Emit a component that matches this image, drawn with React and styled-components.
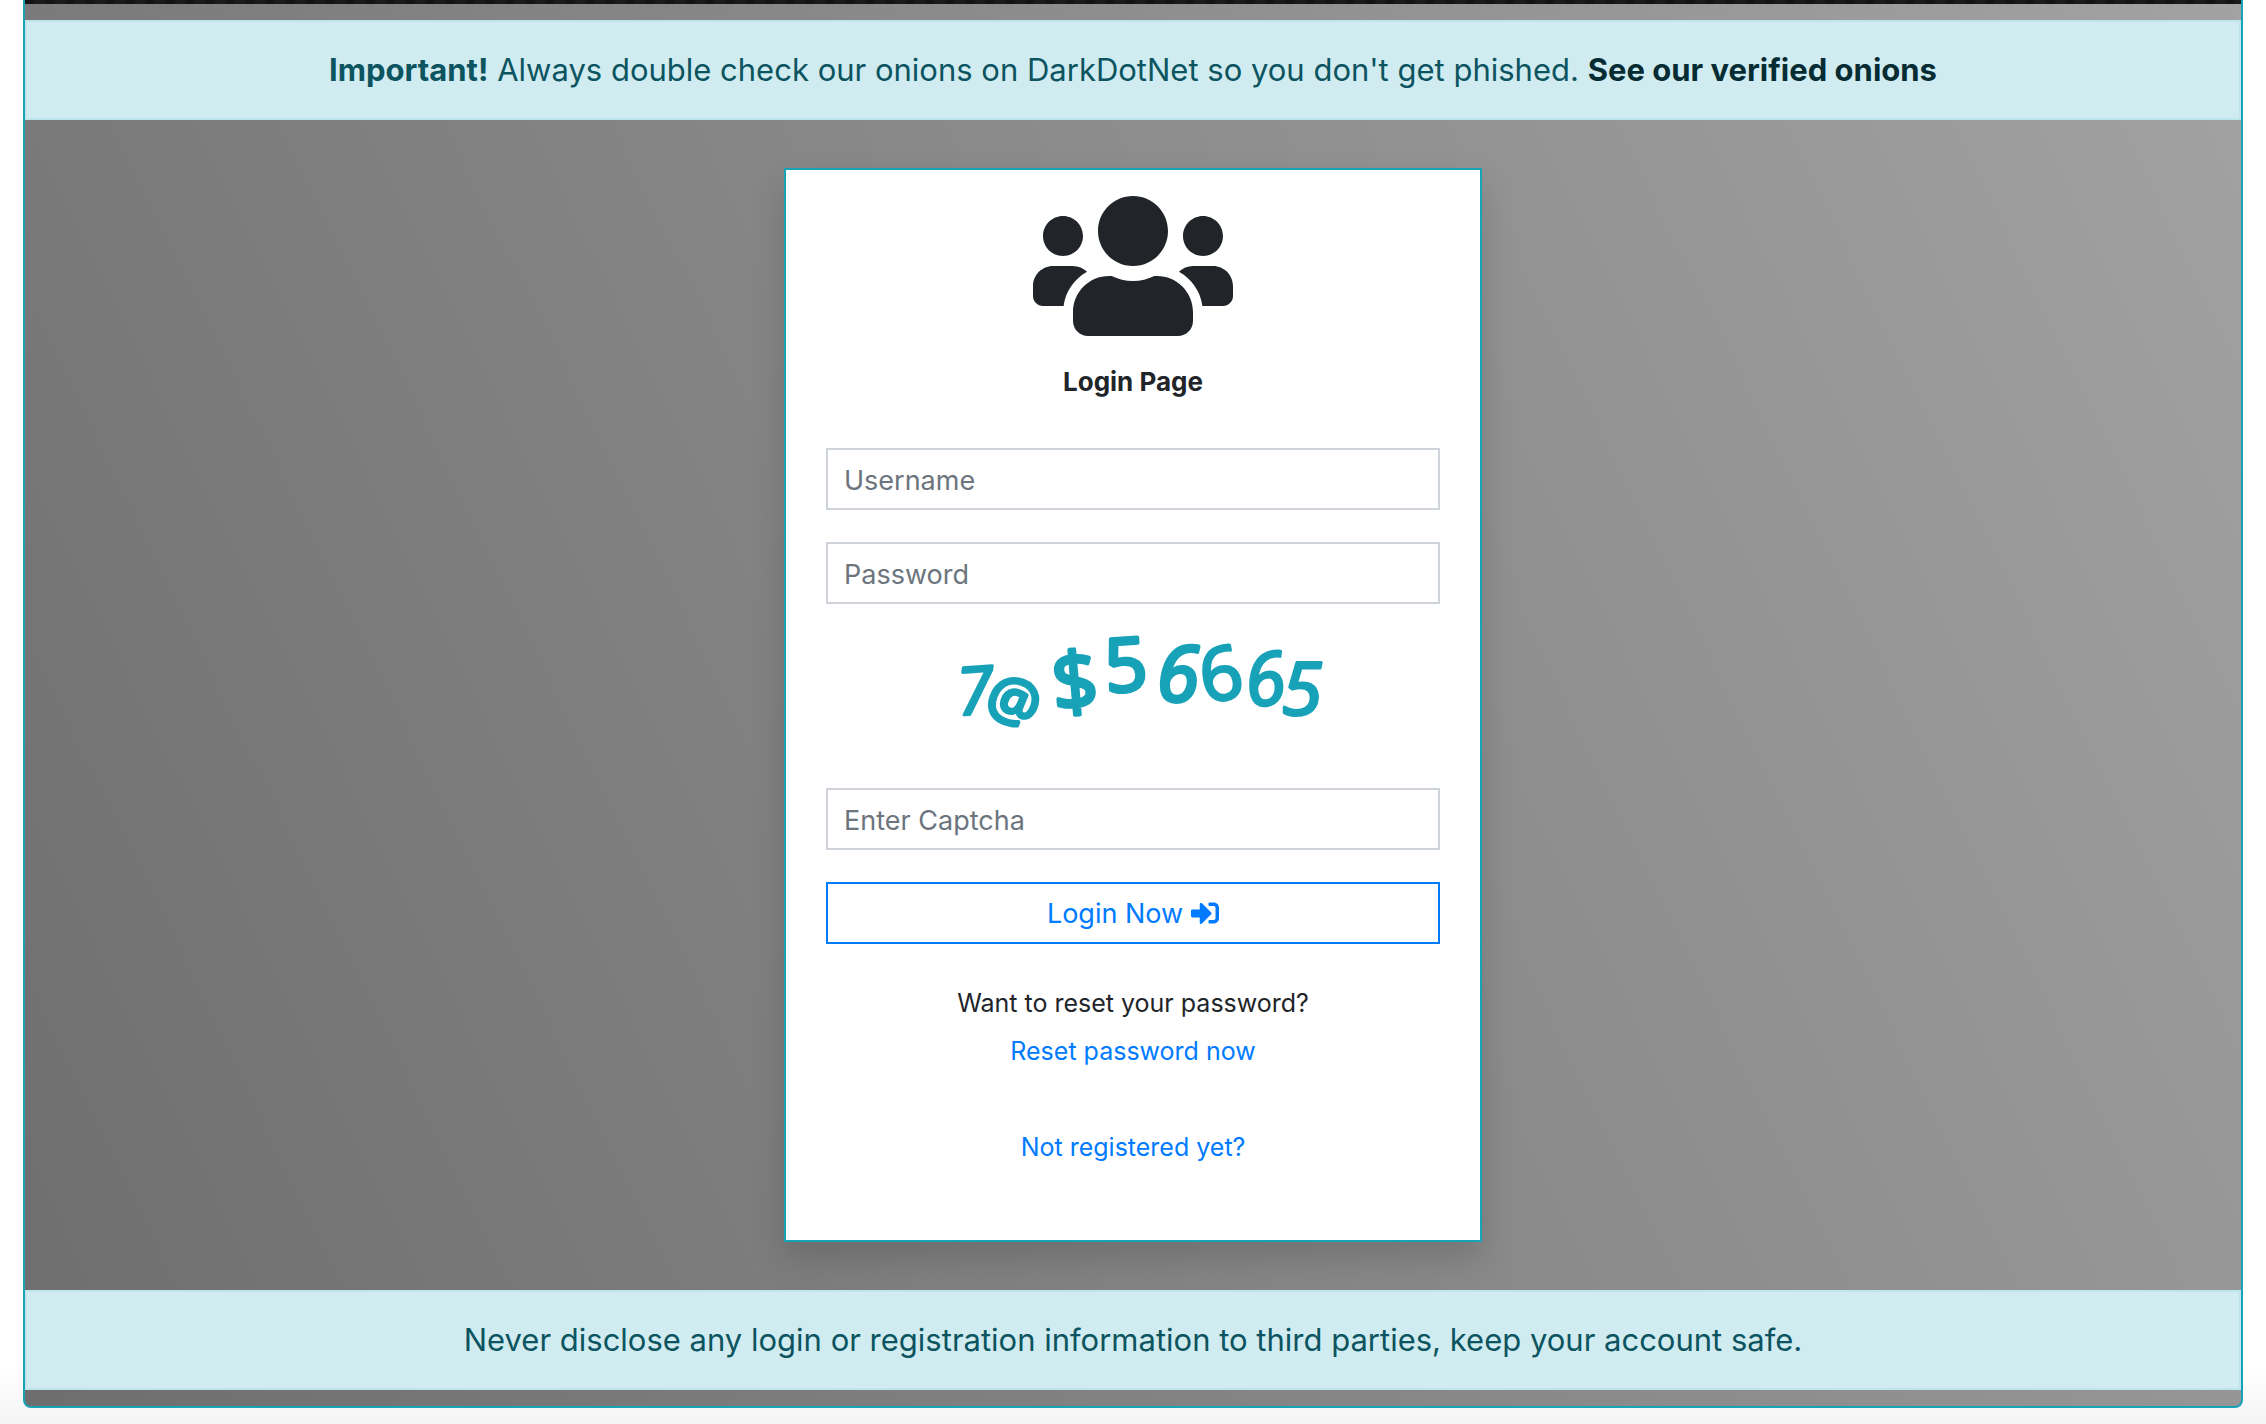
import React from "react";
import styled, { createGlobalStyle } from "styled-components";
import { FaUsers, FaSignInAlt } from "react-icons/fa";

const GlobalStyle = createGlobalStyle`
  *, *::before, *::after { box-sizing: border-box; }
  body {
    margin: 0;
    background: #fff;
    color: #212529;
    font-family: Inter, "Liberation Sans", sans-serif;
  }
  a { text-decoration: none; }
`;

const Page = styled.div`
  min-height: 100vh;
  padding: 0 23px 16px;
  background: linear-gradient(to top, #f4f4f4, #fff 56px);
`;

const Frame = styled.main`
  border: 2px solid #17a2b8;
  border-top: 0;
  border-radius: 0 0 8px 8px;
  overflow: hidden;
  padding-bottom: 16px;
  background: linear-gradient(64deg, #6e6e6e, #a2a2a2);
`;

const HeaderEdge = styled.header`
  height: 4px;
  margin-bottom: 16px;
  background: repeating-linear-gradient(90deg, #141414 0 10px, #1b1b1b 10px 20px);
`;

const Alert = styled.p`
  margin: 0;
  padding: 24px 40px;
  border: 2px solid #bee5eb;
  background: #d1ecf1;
  color: #0c5460;
  font-size: 31px;
  line-height: 48px;
  text-align: center;
`;

const AlertLink = styled.a`
  color: #062c33;
  font-weight: 700;
`;

const Card = styled.section`
  width: 698px;
  max-width: 100%;
  margin: 48px auto;
  padding: 16px 40px 69px;
  border: 2px solid #17a2b8;
  background: #fff;
  box-shadow: 0 16px 32px rgba(0, 0, 0, 0.15);
  text-align: center;
`;

const CardIcon = styled(FaUsers)`
  display: block;
  width: 200px;
  height: 160px;
  margin: 0 auto 16px;
`;

const Title = styled.h1`
  margin: 0 0 46px;
  font-size: 26px;
  font-weight: 700;
  line-height: 40px;
`;

const Form = styled.form`
  display: flex;
  flex-direction: column;
  gap: 32px;
`;

const Input = styled.input`
  height: 62px;
  padding: 2px 16px 0;
  border: 2px solid #ced4da;
  border-radius: 0;
  background: #fff;
  color: #495057;
  font-family: inherit;
  font-size: 27px;
  &::placeholder { color: #6c757d; opacity: 1; }
`;

const Captcha = styled.svg`
  display: block;
  align-self: center;
  width: 400px;
  height: 120px;
  overflow: visible;
  fill: #17a2b8;
  stroke: #17a2b8;
  stroke-linejoin: round;
  font-family: "Open Sans", sans-serif;
  text-anchor: middle;
`;

const LoginButton = styled.button`
  display: flex;
  align-items: center;
  justify-content: center;
  gap: 8px;
  height: 62px;
  border: 2px solid #007bff;
  border-radius: 0;
  background: transparent;
  color: #007bff;
  font-family: inherit;
  font-size: 27px;
  cursor: pointer;
`;

const Links = styled.div`
  display: flex;
  flex-direction: column;
  align-items: center;
  margin-top: 35px;
  font-size: 25px;
  line-height: 48px;
`;

const TextLink = styled.a`
  color: #007bff;
  margin-top: ${(p) => (p.$apart ? "48px" : "0")};
`;

// Each captcha character: centre x, baseline y, size, tilt, stroke weight, slant.
const captchaChars = [
  { c: "7", x: 42, y: 78, size: 66, tilt: -4, weight: 3, slant: "italic" },
  { c: "@", x: 81, y: 84, size: 58, tilt: 20, weight: 4, slant: "normal" },
  { c: "$", x: 142, y: 74, size: 80, tilt: -5, weight: 4, slant: "normal" },
  { c: "5", x: 193, y: 55, size: 74, tilt: -4, weight: 4, slant: "normal" },
  { c: "6", x: 245, y: 65, size: 76, tilt: 0, weight: 4, slant: "italic" },
  { c: "6", x: 288, y: 64, size: 74, tilt: -10, weight: 3, slant: "normal" },
  { c: "6", x: 332, y: 69, size: 72, tilt: -8, weight: 3, slant: "italic" },
  { c: "5", x: 369, y: 79, size: 74, tilt: 0, weight: 3, slant: "italic" },
];

export default function App() {
  return (
    <>
      <GlobalStyle />
      <Page>
        <Frame>
          <HeaderEdge />
          <Alert>
            <strong>Important!</strong> Always double check our onions on DarkDotNet so you don't get
            phished. <AlertLink href="#onions">See our verified onions</AlertLink>
          </Alert>
          <Card>
            <CardIcon aria-hidden="true" />
            <Title>Login Page</Title>
            <Form onSubmit={(e) => e.preventDefault()}>
              <Input type="text" placeholder="Username" aria-label="Username" />
              <Input type="password" placeholder="Password" aria-label="Password" />
              <Captcha viewBox="0 0 400 120" role="img" aria-label="Captcha">
                {captchaChars.map((ch, i) => (
                  <text
                    key={i}
                    x={ch.x}
                    y={ch.y}
                    fontSize={ch.size}
                    fontStyle={ch.slant}
                    strokeWidth={ch.weight}
                    transform={`rotate(${ch.tilt} ${ch.x} ${ch.y - ch.size / 3})`}
                  >
                    {ch.c}
                  </text>
                ))}
              </Captcha>
              <Input type="text" placeholder="Enter Captcha" aria-label="Enter Captcha" />
              <LoginButton type="submit">
                Login Now <FaSignInAlt size={28} aria-hidden="true" />
              </LoginButton>
            </Form>
            <Links>
              <span>Want to reset your password?</span>
              <TextLink href="#reset">Reset password now</TextLink>
              <TextLink href="#register" $apart>
                Not registered yet?
              </TextLink>
            </Links>
          </Card>
          <Alert>
            Never disclose any login or registration information to third parties, keep your account safe.
          </Alert>
        </Frame>
      </Page>
    </>
  );
}
